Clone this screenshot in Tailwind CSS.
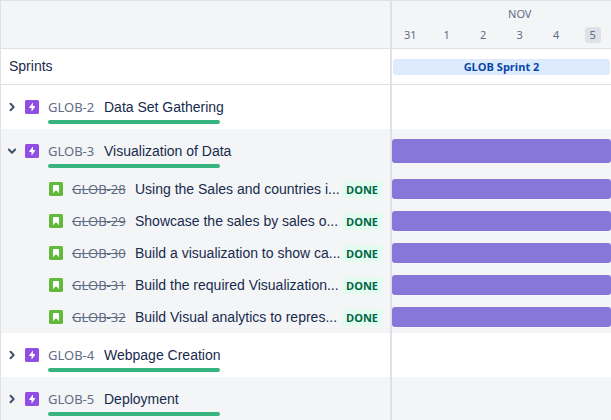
<!DOCTYPE html>
<html lang="en">
<head>
<meta charset="utf-8">
<meta name="viewport" content="width=device-width, initial-scale=1">
<title>Roadmap</title>
<script src="https://cdn.jsdelivr.net/npm/@tailwindcss/browser@4"></script>
</head>
<body class="min-h-screen overflow-hidden border-t border-l border-[#dfe1e6] bg-white font-['Liberation_Sans',Arial,sans-serif] text-sm text-[#172b4d]">

<svg class="hidden" aria-hidden="true">
  <symbol id="right" viewBox="0 0 16 16"><path d="M6.5 4.8 9.7 8l-3.2 3.2" fill="none" stroke="#42526e" stroke-width="2" stroke-linecap="round" stroke-linejoin="round"/></symbol>
  <symbol id="down" viewBox="0 0 16 16"><path d="M4.800 6.500 8 9.700l3.200-3.200" fill="none" stroke="#42526e" stroke-width="2" stroke-linecap="round" stroke-linejoin="round"/></symbol>
  <symbol id="epic" viewBox="0 0 14 14"><rect width="14" height="14" rx="1.5" fill="#904ee2"/><path d="M7.600 3 4.300 7.300c-.3.4-.1.7.3.7h1.900v2.800c0 .4.3.5.6.2l3-4.300c.2-.4 0-.7-.4-.7H8V3.200c0-.4-.2-.5-.4-.2z" fill="#fff"/></symbol>
  <symbol id="story" viewBox="0 0 14 14"><rect width="14" height="14" rx="1.5" fill="#63ba3c"/><path d="M4 4c0-.6.4-1 1-1h4c.6 0 1 .4 1 1v7L7 8.200 4 11z" fill="#fff"/></symbol>
</svg>

<header class="flex h-12 border-b border-[#dfe1e6] bg-[#f4f5f7] font-['Noto_Sans',sans-serif] text-[11px] text-[#5e6c84]">
  <div class="w-[391px] shrink-0 border-r-2 border-[#dfe1e6]"></div>
  <div class="grid flex-1 grid-cols-6 content-start pt-1 text-center leading-4">
    <div class="col-span-5 col-start-2 pt-px">NOV</div>
    <div class="pt-[5px]">31</div>
    <div class="pt-[5px]">1</div>
    <div class="pt-[5px]">2</div>
    <div class="pt-[5px]">3</div>
    <div class="pt-[5px]">4</div>
    <div class="pt-[5px]"><span class="inline-block w-4 rounded-[3px] bg-[#dfe1e6]">5</span></div>
  </div>
</header>

<main>
  <section class="flex h-9 border-b border-[#dfe1e6]">
    <h2 class="w-[391px] shrink-0 border-r-2 border-[#dfe1e6] pt-[7px] pl-2">Sprints</h2>
    <div class="flex min-w-0 flex-1 items-center px-px">
      <div class="w-full rounded-[3px] bg-[#deebff] text-center font-['Open_Sans',sans-serif] text-[11px] leading-4 font-bold text-[#0747a6]">GLOB Sprint 2</div>
    </div>
  </section>

  <ul>
    <li class="flex h-11">
      <div class="flex w-[391px] shrink-0 items-start border-r-2 border-[#dfe1e6] pt-3 pl-[3px]">
        <button class="h-5 w-4" aria-label="Expand GLOB-2" aria-expanded="false"><svg class="size-4"><use href="#right"/></svg></button>
        <svg class="mt-[3px] ml-[5px] size-[14px]" aria-hidden="true"><use href="#epic"/></svg>
        <div class="ml-[9px] min-w-0 flex-1">
          <div class="flex h-5 items-center gap-2"><a href="#" class="w-12 pt-px font-['Noto_Sans',sans-serif] text-[13px] whitespace-nowrap text-[#5e6c84]">GLOB-2</a><span>Data Set Gathering</span></div>
          <div class="mt-[3px] h-1 w-[172px] rounded-full bg-[#36b37e]" role="progressbar" aria-label="GLOB-2 progress" aria-valuenow="100"></div>
        </div>
      </div>
      <div class="flex-1"></div>
    </li>

    <li class="bg-[#f4f5f7]">
      <div class="flex h-11">
        <div class="flex w-[391px] shrink-0 items-start border-r-2 border-[#dfe1e6] pt-3 pl-[3px]">
          <button class="h-5 w-4" aria-label="Collapse GLOB-3" aria-expanded="true"><svg class="size-4"><use href="#down"/></svg></button>
          <svg class="mt-[3px] ml-[5px] size-[14px]" aria-hidden="true"><use href="#epic"/></svg>
          <div class="ml-[9px] min-w-0 flex-1">
            <div class="flex h-5 items-center gap-2"><a href="#" class="w-12 pt-px font-['Noto_Sans',sans-serif] text-[13px] whitespace-nowrap text-[#5e6c84]">GLOB-3</a><span>Visualization of Data</span></div>
            <div class="mt-[3px] h-1 w-[172px] rounded-full bg-[#36b37e]" role="progressbar" aria-label="GLOB-3 progress" aria-valuenow="100"></div>
          </div>
        </div>
        <div class="flex flex-1 items-center"><div class="h-6 w-full rounded-[3px] bg-[#8777d9]"></div></div>
      </div>
      <ul>
        <li class="flex h-8">
          <div class="flex w-[391px] shrink-0 items-center border-r-2 border-[#dfe1e6] pr-2 pl-12">
            <svg class="size-[14px] shrink-0" aria-hidden="true"><use href="#story"/></svg>
            <a href="#" class="ml-[9px] w-14 shrink-0 pt-px font-['Noto_Sans',sans-serif] text-[13px] whitespace-nowrap text-[#5e6c84] line-through">GLOB-28</a>
            <span class="ml-[7px] flex-1 whitespace-nowrap">Using the Sales and countries i...</span>
            <span class="rounded-[3px] bg-[#e3fcef] px-1 pt-px font-['Open_Sans',sans-serif] text-[11px] leading-4 font-bold text-[#006644]">DONE</span>
          </div>
          <div class="flex flex-1 items-center"><div class="h-5 w-full rounded-[3px] bg-[#8777d9]"></div></div>
        </li>
        <li class="flex h-8">
          <div class="flex w-[391px] shrink-0 items-center border-r-2 border-[#dfe1e6] pr-2 pl-12">
            <svg class="size-[14px] shrink-0" aria-hidden="true"><use href="#story"/></svg>
            <a href="#" class="ml-[9px] w-14 shrink-0 pt-px font-['Noto_Sans',sans-serif] text-[13px] whitespace-nowrap text-[#5e6c84] line-through">GLOB-29</a>
            <span class="ml-[7px] flex-1 whitespace-nowrap">Showcase the sales by sales o...</span>
            <span class="rounded-[3px] bg-[#e3fcef] px-1 pt-px font-['Open_Sans',sans-serif] text-[11px] leading-4 font-bold text-[#006644]">DONE</span>
          </div>
          <div class="flex flex-1 items-center"><div class="h-5 w-full rounded-[3px] bg-[#8777d9]"></div></div>
        </li>
        <li class="flex h-8">
          <div class="flex w-[391px] shrink-0 items-center border-r-2 border-[#dfe1e6] pr-2 pl-12">
            <svg class="size-[14px] shrink-0" aria-hidden="true"><use href="#story"/></svg>
            <a href="#" class="ml-[9px] w-14 shrink-0 pt-px font-['Noto_Sans',sans-serif] text-[13px] whitespace-nowrap text-[#5e6c84] line-through">GLOB-30</a>
            <span class="ml-[7px] flex-1 whitespace-nowrap">Build a visualization to show ca...</span>
            <span class="rounded-[3px] bg-[#e3fcef] px-1 pt-px font-['Open_Sans',sans-serif] text-[11px] leading-4 font-bold text-[#006644]">DONE</span>
          </div>
          <div class="flex flex-1 items-center"><div class="h-5 w-full rounded-[3px] bg-[#8777d9]"></div></div>
        </li>
        <li class="flex h-8">
          <div class="flex w-[391px] shrink-0 items-center border-r-2 border-[#dfe1e6] pr-2 pl-12">
            <svg class="size-[14px] shrink-0" aria-hidden="true"><use href="#story"/></svg>
            <a href="#" class="ml-[9px] w-14 shrink-0 pt-px font-['Noto_Sans',sans-serif] text-[13px] whitespace-nowrap text-[#5e6c84] line-through">GLOB-31</a>
            <span class="ml-[7px] flex-1 whitespace-nowrap">Build the required Visualization...</span>
            <span class="rounded-[3px] bg-[#e3fcef] px-1 pt-px font-['Open_Sans',sans-serif] text-[11px] leading-4 font-bold text-[#006644]">DONE</span>
          </div>
          <div class="flex flex-1 items-center"><div class="h-5 w-full rounded-[3px] bg-[#8777d9]"></div></div>
        </li>
        <li class="flex h-8">
          <div class="flex w-[391px] shrink-0 items-center border-r-2 border-[#dfe1e6] pr-2 pl-12">
            <svg class="size-[14px] shrink-0" aria-hidden="true"><use href="#story"/></svg>
            <a href="#" class="ml-[9px] w-14 shrink-0 pt-px font-['Noto_Sans',sans-serif] text-[13px] whitespace-nowrap text-[#5e6c84] line-through">GLOB-32</a>
            <span class="ml-[7px] flex-1 whitespace-nowrap">Build Visual analytics to repres...</span>
            <span class="rounded-[3px] bg-[#e3fcef] px-1 pt-px font-['Open_Sans',sans-serif] text-[11px] leading-4 font-bold text-[#006644]">DONE</span>
          </div>
          <div class="flex flex-1 items-center"><div class="h-5 w-full rounded-[3px] bg-[#8777d9]"></div></div>
        </li>
      </ul>
    </li>

    <li class="flex h-11">
      <div class="flex w-[391px] shrink-0 items-start border-r-2 border-[#dfe1e6] pt-3 pl-[3px]">
        <button class="h-5 w-4" aria-label="Expand GLOB-4" aria-expanded="false"><svg class="size-4"><use href="#right"/></svg></button>
        <svg class="mt-[3px] ml-[5px] size-[14px]" aria-hidden="true"><use href="#epic"/></svg>
        <div class="ml-[9px] min-w-0 flex-1">
          <div class="flex h-5 items-center gap-2"><a href="#" class="w-12 pt-px font-['Noto_Sans',sans-serif] text-[13px] whitespace-nowrap text-[#5e6c84]">GLOB-4</a><span>Webpage Creation</span></div>
          <div class="mt-[3px] h-1 w-[172px] rounded-full bg-[#36b37e]" role="progressbar" aria-label="GLOB-4 progress" aria-valuenow="100"></div>
        </div>
      </div>
      <div class="flex-1"></div>
    </li>

    <li class="flex h-11 bg-[#f4f5f7]">
      <div class="flex w-[391px] shrink-0 items-start border-r-2 border-[#dfe1e6] pt-3 pl-[3px]">
        <button class="h-5 w-4" aria-label="Expand GLOB-5" aria-expanded="false"><svg class="size-4"><use href="#right"/></svg></button>
        <svg class="mt-[3px] ml-[5px] size-[14px]" aria-hidden="true"><use href="#epic"/></svg>
        <div class="ml-[9px] min-w-0 flex-1">
          <div class="flex h-5 items-center gap-2"><a href="#" class="w-12 pt-px font-['Noto_Sans',sans-serif] text-[13px] whitespace-nowrap text-[#5e6c84]">GLOB-5</a><span>Deployment</span></div>
          <div class="mt-[3px] h-1 w-[172px] rounded-full bg-[#36b37e]" role="progressbar" aria-label="GLOB-5 progress" aria-valuenow="100"></div>
        </div>
      </div>
      <div class="flex-1"></div>
    </li>
  </ul>
</main>
</body>
</html>
